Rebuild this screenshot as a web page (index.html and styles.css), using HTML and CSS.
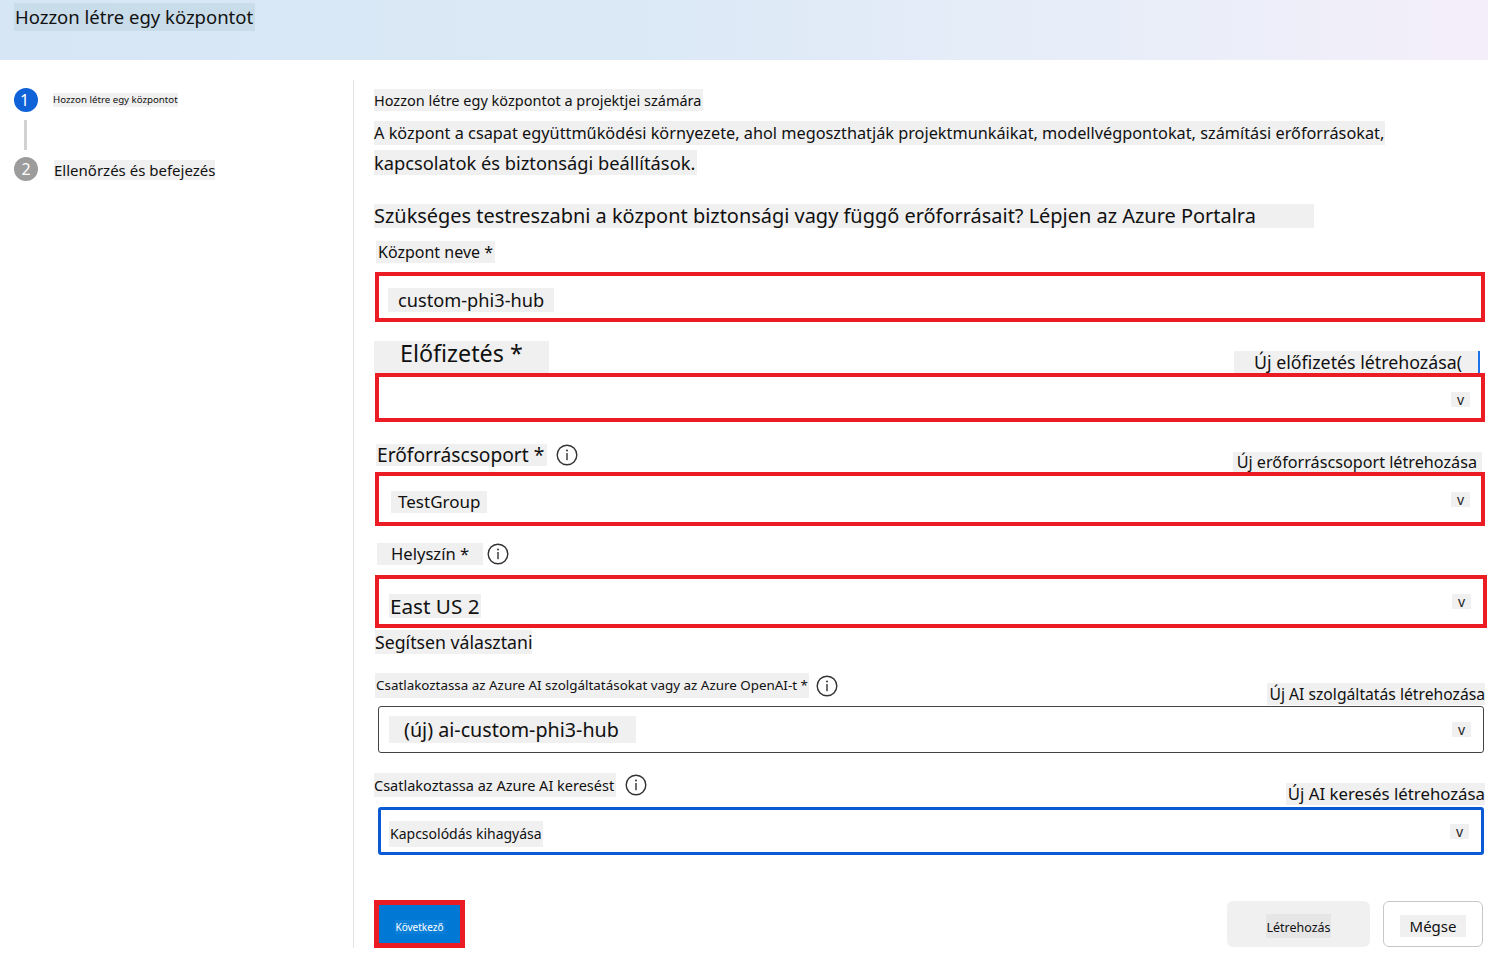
FILE: index.html
```html
<!DOCTYPE html>
<html lang="hu">
<head>
<meta charset="utf-8">
<title>Hozzon létre egy központot</title>
<link rel="stylesheet" href="styles.css">
</head>
<body>
<header class="topbar">
  <h1 class="title">Hozzon létre egy központot</h1>
</header>
<div class="layout">
  <aside class="sidebar">
    <div class="step">
      <span class="dot dot-active">1</span>
      <span class="step-label small">Hozzon létre egy központot</span>
    </div>
    <div class="connector"></div>
    <div class="step">
      <span class="dot dot-idle">2</span>
      <span class="step-label big">Ellenőrzés és befejezés</span>
    </div>
  </aside>
  <main class="main">
    <p class="t intro">Hozzon létre egy központot a projektjei számára</p>
    <p class="t desc1">A központ a csapat együttműködési környezete, ahol megoszthatják projektmunkáikat, modellvégpontokat, számítási erőforrásokat,</p>
    <p class="t desc2">kapcsolatok és biztonsági beállítások.</p>
    <p class="t question">Szükséges testreszabni a központ biztonsági vagy függő erőforrásait? Lépjen az Azure Portalra</p>

    <div class="t label-hub">Központ neve *</div>
    <div class="box red box-hub"><span class="val val-hub">custom-phi3-hub</span></div>

    <div class="row row-sub">
      <span class="t label-sub">Előfizetés *</span>
      <span class="t link link-sub">Új előfizetés létrehozása(</span>
    </div>
    <div class="box red box-sub"><span class="chev">v</span></div>

    <div class="row row-rg">
      <span class="labelwrap"><span class="t label-rg">Erőforráscsoport *</span><svg class="info info-rg" viewBox="0 0 22 22"><circle cx="11" cy="11" r="9.8" fill="none" stroke="#333" stroke-width="1.4"/><circle cx="11" cy="6.6" r="1" fill="#333"/><rect x="10.3" y="9" width="1.4" height="7.2" fill="#333"/></svg></span>
      <span class="t link link-rg">Új erőforráscsoport létrehozása</span>
    </div>
    <div class="box red box-rg"><span class="val val-rg">TestGroup</span><span class="chev">v</span></div>

    <div class="row row-loc">
      <span class="labelwrap"><span class="t label-loc">Helyszín *</span><svg class="info info-loc" viewBox="0 0 22 22"><circle cx="11" cy="11" r="9.8" fill="none" stroke="#333" stroke-width="1.4"/><circle cx="11" cy="6.6" r="1" fill="#333"/><rect x="10.3" y="9" width="1.4" height="7.2" fill="#333"/></svg></span>
    </div>
    <div class="box red box-loc"><span class="val val-loc">East US 2</span><span class="chev">v</span></div>
    <div class="t help">Segítsen választani</div>

    <div class="row row-ai">
      <span class="labelwrap"><span class="t label-ai">Csatlakoztassa az Azure AI szolgáltatásokat vagy az Azure OpenAI-t *</span><svg class="info info-ai" viewBox="0 0 22 22"><circle cx="11" cy="11" r="9.8" fill="none" stroke="#333" stroke-width="1.4"/><circle cx="11" cy="6.6" r="1" fill="#333"/><rect x="10.3" y="9" width="1.4" height="7.2" fill="#333"/></svg></span>
      <span class="t link link-ai">Új AI szolgáltatás létrehozása</span>
    </div>
    <div class="box grey box-ai"><span class="val val-ai">(új) ai-custom-phi3-hub</span><span class="chev">v</span></div>

    <div class="row row-search">
      <span class="labelwrap"><span class="t label-search">Csatlakoztassa az Azure AI keresést</span><svg class="info info-search" viewBox="0 0 22 22"><circle cx="11" cy="11" r="9.8" fill="none" stroke="#333" stroke-width="1.4"/><circle cx="11" cy="6.6" r="1" fill="#333"/><rect x="10.3" y="9" width="1.4" height="7.2" fill="#333"/></svg></span>
      <span class="t link link-search">Új AI keresés létrehozása</span>
    </div>
    <div class="box blue box-search"><span class="val val-search">Kapcsolódás kihagyása</span><span class="chev">v</span></div>

    <div class="actions">
      <div class="next-wrap"><button class="btn-next"><span class="next-text">Következő</span></button></div>
      <div class="right-actions">
        <button class="btn-create"><span class="create-text">Létrehozás</span></button>
        <button class="btn-cancel"><span class="cancel-text">Mégse</span></button>
      </div>
    </div>
  </main>
</div>
</body>
</html>
```

FILE: styles.css
```css
* { box-sizing: border-box; }
html, body { margin: 0; padding: 0; }
body {
  width: 1488px;
  height: 954px;
  overflow: hidden;
  background: #ffffff;
  color: #111;
  font-family: "Noto Sans", "Open Sans", sans-serif;
}
p { margin: 0; }

.topbar {
  height: 60px;
  background: linear-gradient(90deg, #d6e6f5 0%, #dce9f6 45%, #e8eef9 75%, #f4eefa 100%);
  padding: 3px 0 0 14px;
}
.title {
  margin: 0;
  display: inline-block;
  font-size: 18.5px;
  font-weight: 400;
  line-height: 28px;
  padding: 0 2px 0 1px;
  background: #c9dcea;
  color: #111;
}

.layout {
  display: flex;
  margin-top: 20px;
  height: 868px;
}
.sidebar {
  width: 354px;
  flex: none;
  border-right: 1px solid #e3e3e3;
  padding: 8px 0 0 14px;
}
.step {
  display: flex;
  align-items: center;
  height: 24px;
}
.dot {
  width: 24px;
  height: 24px;
  border-radius: 50%;
  color: #fff;
  font-size: 16px;
  line-height: 24px;
  text-align: center;
  flex: none;
  padding-right: 3px;
}
.dot-active { background: #0f62d8; }
.dot-idle { background: #9c9c9c; padding-right: 0; }
.step-label {
  background: #f0f0f0;
  color: #111;
}
.step-label.small {
  font-size: 9.7px;
  line-height: 14px;
  margin-left: 15px;
}
.step-label.big {
  font-size: 15px;
  line-height: 20px;
  margin-left: 16px;
  margin-top: 2px;
}
.connector {
  width: 3px;
  height: 30px;
  background: #d2d2d2;
  margin: 8px 0 7px 10px;
}

.main {
  flex: 1;
  display: flex;
  flex-direction: column;
  align-items: flex-start;
  padding: 9px 3px 0 20px;
}
.t { background: #f0f0f0; color: #111; }
.intro { font-size: 14.5px; line-height: 22px; padding-right: 2px; }
.desc1 { font-size: 16.3px; line-height: 24px; margin-top: 10px; padding-right: 1px; }
.desc2 { font-size: 18.3px; line-height: 25px; margin-top: 5px; padding-right: 2px; }
.question { font-size: 19.95px; line-height: 24px; margin-top: 29px; padding-right: 58px; }
.label-hub { font-size: 16px; line-height: 22px; margin-top: 13px; margin-left: 2px; padding: 0 2px; }

.box {
  align-self: stretch;
  display: flex;
  align-items: center;
  justify-content: space-between;
  margin-left: 1px;
}
.red { border: 4px solid #ec1c24; }
.grey { border: 1px solid #444; border-radius: 3px; margin-left: 4px; margin-right: 1px; }
.blue { border: 3px solid #0a5ad3; border-radius: 3px; margin-left: 4px; margin-right: 1px; }
.val { background: #f0f0f0; color: #111; }
.chev {
  font-size: 14px;
  line-height: 15px;
  background: #f0f0f0;
  color: #222;
  padding: 0 6px;
  margin-right: 11px;
}

.box-hub { height: 50px; margin-top: 9px; }
.val-hub { font-size: 18.2px; line-height: 24px; padding: 0 10px; margin-left: 9px; margin-top: 6px; }

.row {
  align-self: stretch;
  display: flex;
  justify-content: space-between;
}
.labelwrap { display: flex; align-items: center; align-self: flex-start; }
.info { width: 22px; height: 22px; margin-left: 9px; }
.info-loc { margin-left: 4px; }
.info-ai { margin-left: 7px; }
.link { align-self: flex-end; }

.row-sub { margin-top: 19px; }
.label-sub { font-size: 23.3px; line-height: 25px; padding: 0 26px 0 26px; }
.link-sub { font-size: 17.8px; line-height: 22px; padding: 0 16px 0 20px; margin-top: 10px; margin-right: 5px; border-right: 2px solid #1a73e8; }
.box-sub { height: 49px; justify-content: flex-end; }
.box-sub .chev { margin-top: 4px; }

.row-rg { margin-top: 22px; }
.label-rg { font-size: 19.2px; line-height: 22px; margin-left: 2px; padding: 0 3px 0 1px; }
.link-rg { font-size: 16.2px; line-height: 20px; padding: 0 5px 0 4px; margin-top: 8px; margin-right: 3px; }
.box-rg { height: 54px; }
.val-rg { font-size: 17px; line-height: 22px; padding: 0 7px 0 7px; margin-left: 12px; margin-top: 6px; }

.row-loc { margin-top: 17px; padding-bottom: 10px; }
.label-loc { font-size: 16.6px; line-height: 22px; margin-left: 3px; padding: 0 14px 0 14px; }
.box-loc { height: 53px; margin-right: -2px; }
.val-loc { font-size: 20.7px; line-height: 24px; padding: 0 1px; margin-left: 10px; margin-top: 8px; }
.box-loc .chev { margin-right: 12px; }
.help { font-size: 17.7px; line-height: 24px; margin-top: 2px; margin-left: 1px; }

.row-ai { margin-top: 19px; }
.label-ai { font-size: 13.4px; line-height: 25px; margin-left: 1px; padding: 0 1px; }
.link-ai { font-size: 15.7px; line-height: 22px; padding: 0 0 0 2px; margin-top: 10px; margin-bottom: 1px; }
.box-ai { height: 47px; }
.val-ai { font-size: 19.7px; line-height: 27px; padding: 0 17px 0 15px; margin-left: 10px; }
.box-ai .chev { margin-right: 12px; }

.row-search { margin-top: 20px; }
.label-search { font-size: 14.5px; line-height: 24px; padding-right: 2px; }
.link-search { font-size: 16.8px; line-height: 22px; padding-left: 2px; margin-top: 10px; margin-bottom: 2px; }
.box-search { height: 48px; }
.val-search { font-size: 14px; line-height: 26px; padding: 0 1px; margin-left: 8px; margin-top: 6px; }
.box-search .chev { margin-right: 12px; }

.actions {
  align-self: stretch;
  display: flex;
  justify-content: space-between;
  align-items: flex-start;
  margin-top: 45px;
}
.next-wrap {
  border: 5px solid #ec1c24;
  width: 91px;
  height: 48px;
}
.btn-next {
  display: flex;
  align-items: center;
  justify-content: center;
  width: 100%;
  height: 100%;
  border: 0;
  background: #0078d4;
  padding: 0;
  margin: 0;
  font-family: inherit;
}
.next-text {
  background: #0c7fd8;
  color: #fff;
  font-size: 10px;
  line-height: 14px;
  padding: 0 1px;
  margin-top: 6px;
}
.right-actions { display: flex; gap: 13px; margin-top: 1px; margin-right: 2px; }
.btn-create {
  width: 143px;
  height: 46px;
  background: #f0f0f0;
  border: 0;
  border-radius: 6px;
  font-family: inherit;
  padding: 0;
  display: flex;
  align-items: center;
  justify-content: center;
}
.create-text { font-size: 12.5px; line-height: 20px; color: #111; background: #e6e6e6; padding-top: 4px; margin-top: 4px; }
.btn-cancel {
  width: 100px;
  height: 46px;
  background: #fff;
  border: 1px solid #c8c8c8;
  border-radius: 6px;
  font-family: inherit;
  padding: 0;
  display: flex;
  align-items: center;
  justify-content: center;
}
.cancel-text { font-size: 15px; line-height: 22px; background: #f0f0f0; color: #111; padding: 0 10px; margin-top: 3px; }
```
